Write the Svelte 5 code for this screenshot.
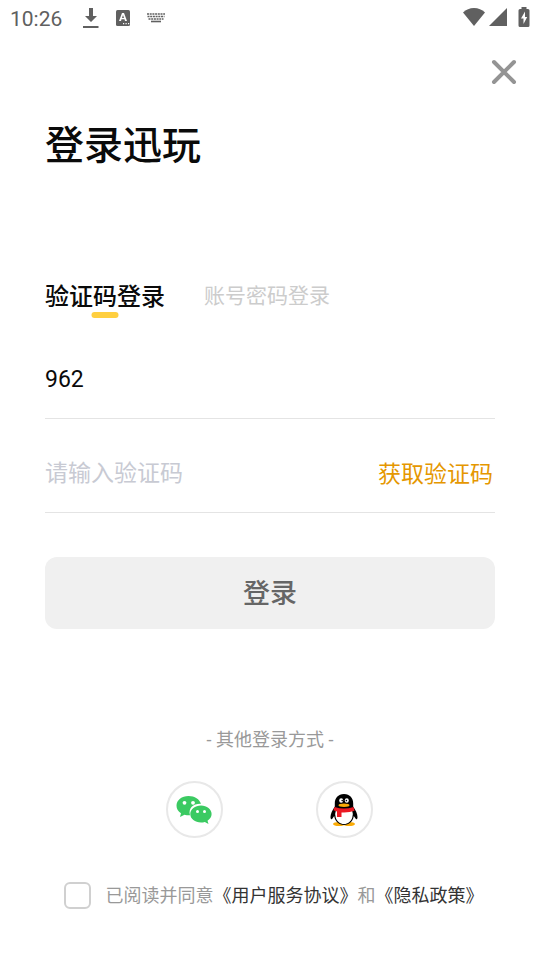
<script lang="ts">
  type Mode = 'code' | 'password';

  let mode = $state<Mode>('code');
  let phone = $state('962');
  let code = $state('');
  let agreed = $state(false);

  const tabs: { id: Mode; label: string }[] = [
    { id: 'code', label: '验证码登录' },
    { id: 'password', label: '账号密码登录' }
  ];
</script>

<div class="screen">
  <div class="status-bar">
    <span class="time">10:26</span>
    <svg class="download" width="16" height="22" viewBox="0 0 16 22" aria-hidden="true">
      <path d="M6 1h4v8h4l-6 6-6-6h4zM0 19h15.500v2H0z" />
    </svg>
    <svg class="letter" width="16" height="18" viewBox="0 0 16 18" aria-hidden="true">
      <rect x="1" y="1" width="14" height="16" rx="1.5" />
      <path class="cut" d="M7 4h2l3 8h-2l-.5-1.700h-3L6 12H4zM8 6l-1 3h2z" fill-rule="evenodd" />
      <path class="cut" d="M8 14h1.200v1.200H8zM10.500 14h1.200v1.200h-1.200zM13 14h1.200v1.200H13z" />
    </svg>
    <svg class="keyboard" width="20" height="12" viewBox="0 0 20 12" aria-hidden="true">
      <path d="M1 2h18M1.500 4.500h17M2.500 7h15" stroke-dasharray="2 .7" />
      <path d="M5 9.500h10" />
    </svg>
    <div class="signals">
      <svg width="24" height="20" viewBox="0 0 24 20" aria-hidden="true">
        <path d="M12 19 1 5.500Q5.500 1 12 1t11 4.500z" />
      </svg>
      <svg width="20" height="20" viewBox="0 0 20 20" aria-hidden="true">
        <path d="M19 1v18H1z" />
      </svg>
      <svg class="battery" width="12" height="20" viewBox="0 0 12 20" aria-hidden="true">
        <path d="M3.500 0h5v2H10q1.500 0 1.500 1.500v15Q11.500 20 10 20H2Q.5 20 .5 18.500v-15Q.5 2 2 2h1.500z" />
        <path class="cut" d="M7 4.500 3 11.500h2.500V17l3.700-7H7z" />
      </svg>
    </div>
  </div>

  <header>
    <button class="close" type="button" aria-label="关闭">
      <svg width="28" height="28" viewBox="0 0 28 28" aria-hidden="true">
        <path d="m4 4 20 20M24 4 4 24" />
      </svg>
    </button>
  </header>

  <main>
    <h1>登录迅玩</h1>

    <div class="tabs" role="tablist">
      {#each tabs as tab}
        <button
          type="button"
          role="tab"
          class="tab"
          class:active={mode === tab.id}
          aria-selected={mode === tab.id}
          onclick={() => (mode = tab.id)}
        >
          {tab.label}
        </button>
      {/each}
    </div>

    <form onsubmit={(e) => e.preventDefault()}>
      <div class="field">
        <input type="tel" aria-label="手机号" bind:value={phone} />
      </div>
      <div class="field">
        <input type="text" aria-label="验证码" placeholder="请输入验证码" bind:value={code} />
        <button class="get-code" type="button">获取验证码</button>
      </div>
      <button class="submit" type="submit">登录</button>
    </form>

    <p class="other">- 其他登录方式 -</p>

    <div class="providers">
      <button type="button" aria-label="微信登录">
        <svg width="36" height="30" viewBox="0 0 36 30" aria-hidden="true">
          <path
            fill="#3bca62"
            d="M12.500 1C5.800 1 .5 5.200.5 10.700c0 3.200 1.700 5.800 4.500 7.600L4 22l4.500-2.300c1.700.5 3.500.7 5.500.6C12 13 17.500 8.500 25 8.800 23.500 4.200 18.800 1 12.500 1z"
          />
          <path
            fill="#3bca62"
            d="M25 10.500c-6 0-10.700 3.700-10.700 8.600S19 27.500 25 27.500c1.300 0 2.700-.2 3.800-.6l3.700 2-1-3.200c2.600-1.600 4.100-3.900 4.100-6.600 0-4.900-4.700-8.600-10.600-8.600z"
          />
          <g fill="#fff">
            <circle cx="8.500" cy="7.800" r="1.900" />
            <circle cx="17" cy="7.800" r="1.900" />
            <circle cx="21.500" cy="16.500" r="1.500" />
            <circle cx="28.500" cy="16.500" r="1.500" />
          </g>
        </svg>
      </button>
      <button type="button" aria-label="QQ登录">
        <svg width="28" height="34" viewBox="0 0 28 34" aria-hidden="true">
          <ellipse cx="9" cy="31" rx="6" ry="2" fill="#faab07" />
          <ellipse cx="19" cy="31" rx="6" ry="2" fill="#faab07" />
          <path
            d="M14 1C8 1 4.800 5.300 4.800 10.500v3C2.500 17 .5 20.500.5 24c0 2 .8 2.700 1.600 1.900L4.200 23C5 28.500 9 32 14 32s9-3.500 9.800-9l2.100 2.900c.8.8 1.600.1 1.600-1.900 0-3.500-2-7-4.300-10.500v-3C23.200 5.300 20 1 14 1z"
          />
          <path fill="#fff" d="M6 17h16q1.500 4 .3 7.500C21 28.500 18 31 14 31s-7-2.500-8.300-6.500Q4.500 21 6 17z" />
          <path fill="#eb1923" d="M4.500 14Q14 17 23.500 14l1 3.800Q19 20 11.500 19.500V24H7v-5.500l-3.500-1.200z" />
          <ellipse cx="11.200" cy="7.500" rx="2" ry="2.300" fill="#fff" />
          <ellipse cx="16.800" cy="7.500" rx="2" ry="2.300" fill="#fff" />
          <circle cx="12.200" cy="7.600" r=".8" />
          <circle cx="16.400" cy="7.600" r=".8" />
          <ellipse cx="14" cy="12.300" rx="5.500" ry="1.700" fill="#faab07" />
        </svg>
      </button>
    </div>
  </main>

  <footer>
    <input id="agree" type="checkbox" bind:checked={agreed} />
    <div class="terms">
      <label for="agree">已阅读并同意</label><a href="#terms">《用户服务协议》</a><span>和</span><a href="#privacy">《隐私政策》</a>
    </div>
  </footer>
</div>

<style>
  :global(body) {
    margin: 0;
    background: #fff;
  }

  .screen {
    font-family: Roboto, 'Noto Sans CJK SC', sans-serif;
    color: #0a0a0a;
  }

  button,
  input {
    font: inherit;
    margin: 0;
    padding: 0;
    border: 0;
    background: none;
  }

  button,
  input[type='checkbox'] {
    cursor: pointer;
  }

  svg {
    display: block;
    flex: none;
  }

  .status-bar {
    display: flex;
    align-items: center;
    height: 36px;
    padding: 0 10px;
    color: #606060;
    fill: #606060;
  }

  .time {
    padding-top: 2px;
    font-size: 21px;
    line-height: 36px;
  }

  .download {
    margin-left: 21px;
  }

  .letter {
    margin-left: 16px;
  }

  .keyboard {
    margin-left: 15px;
    fill: none;
    stroke: #606060;
    stroke-width: 1.6;
  }

  .cut {
    fill: #fff;
  }

  .signals {
    display: flex;
    gap: 2px;
    margin-left: auto;
    padding-bottom: 2px;
  }

  .battery {
    margin-left: 8px;
  }

  header {
    display: flex;
    justify-content: flex-end;
    padding: 22px 22px 0;
  }

  .close path {
    fill: none;
    stroke: #949494;
    stroke-width: 4;
    stroke-linecap: round;
  }

  main {
    padding: 30px 45px 0;
  }

  h1 {
    margin: 0;
    font-size: 39px;
    font-weight: 500;
    line-height: 60px;
  }

  .tabs {
    display: flex;
    gap: 39px;
    margin-top: 98px;
  }

  .tab {
    position: relative;
    font-size: 21px;
    line-height: 44px;
    color: #ccc;
  }

  .tab.active {
    padding-top: 2px;
    font-size: 24px;
    font-weight: 500;
    line-height: 42px;
    color: #0a0a0a;
  }

  .tab.active::after {
    content: '';
    position: absolute;
    bottom: 0;
    left: 50%;
    width: 27px;
    height: 6px;
    border-radius: 3px;
    background: #ffcf3f;
    transform: translateX(-50%);
  }

  form {
    margin-top: 7px;
  }

  .field {
    display: flex;
    align-items: center;
    height: 77px;
    padding-top: 16px;
    border-bottom: 1px solid #e4e4e4;
    font-size: 23px;
  }

  .field input {
    flex: 1;
    min-width: 0;
    height: 40px;
    outline: none;
    color: #0a0a0a;
  }

  .field input::placeholder {
    color: #c8cad3;
    opacity: 1;
  }

  .get-code {
    padding: 0 2px 4px 0;
    color: #e59700;
  }

  .submit {
    width: 100%;
    height: 72px;
    margin-top: 44px;
    padding-bottom: 4px;
    border-radius: 12px;
    background: #f0f0f0;
    color: #666;
    font-size: 27px;
    font-weight: 500;
  }

  .other {
    margin: 97px 0 0;
    font-size: 18px;
    line-height: 28px;
    text-align: center;
    color: #999;
  }

  .providers {
    display: flex;
    justify-content: center;
    gap: 93px;
    margin-top: 27px;
    padding-right: 2px;
  }

  .providers button {
    display: flex;
    align-items: center;
    justify-content: center;
    width: 57px;
    height: 57px;
    border: 2px solid #e8e8e8;
    border-radius: 50%;
  }

  footer {
    display: flex;
    align-items: center;
    justify-content: center;
    gap: 15px;
    padding: 42px 0 50px 7px;
    font-size: 18px;
    line-height: 28px;
    color: #999;
  }

  footer input {
    flex: none;
    appearance: none;
    width: 27px;
    height: 27px;
    border: 2px solid #d0d0d0;
    border-radius: 6px;
  }

  footer input:checked {
    border-color: #ffcf3f;
    background: #ffcf3f;
  }

  .terms {
    padding-top: 2px;
  }

  .terms a {
    color: #333;
    text-decoration: none;
  }
</style>
